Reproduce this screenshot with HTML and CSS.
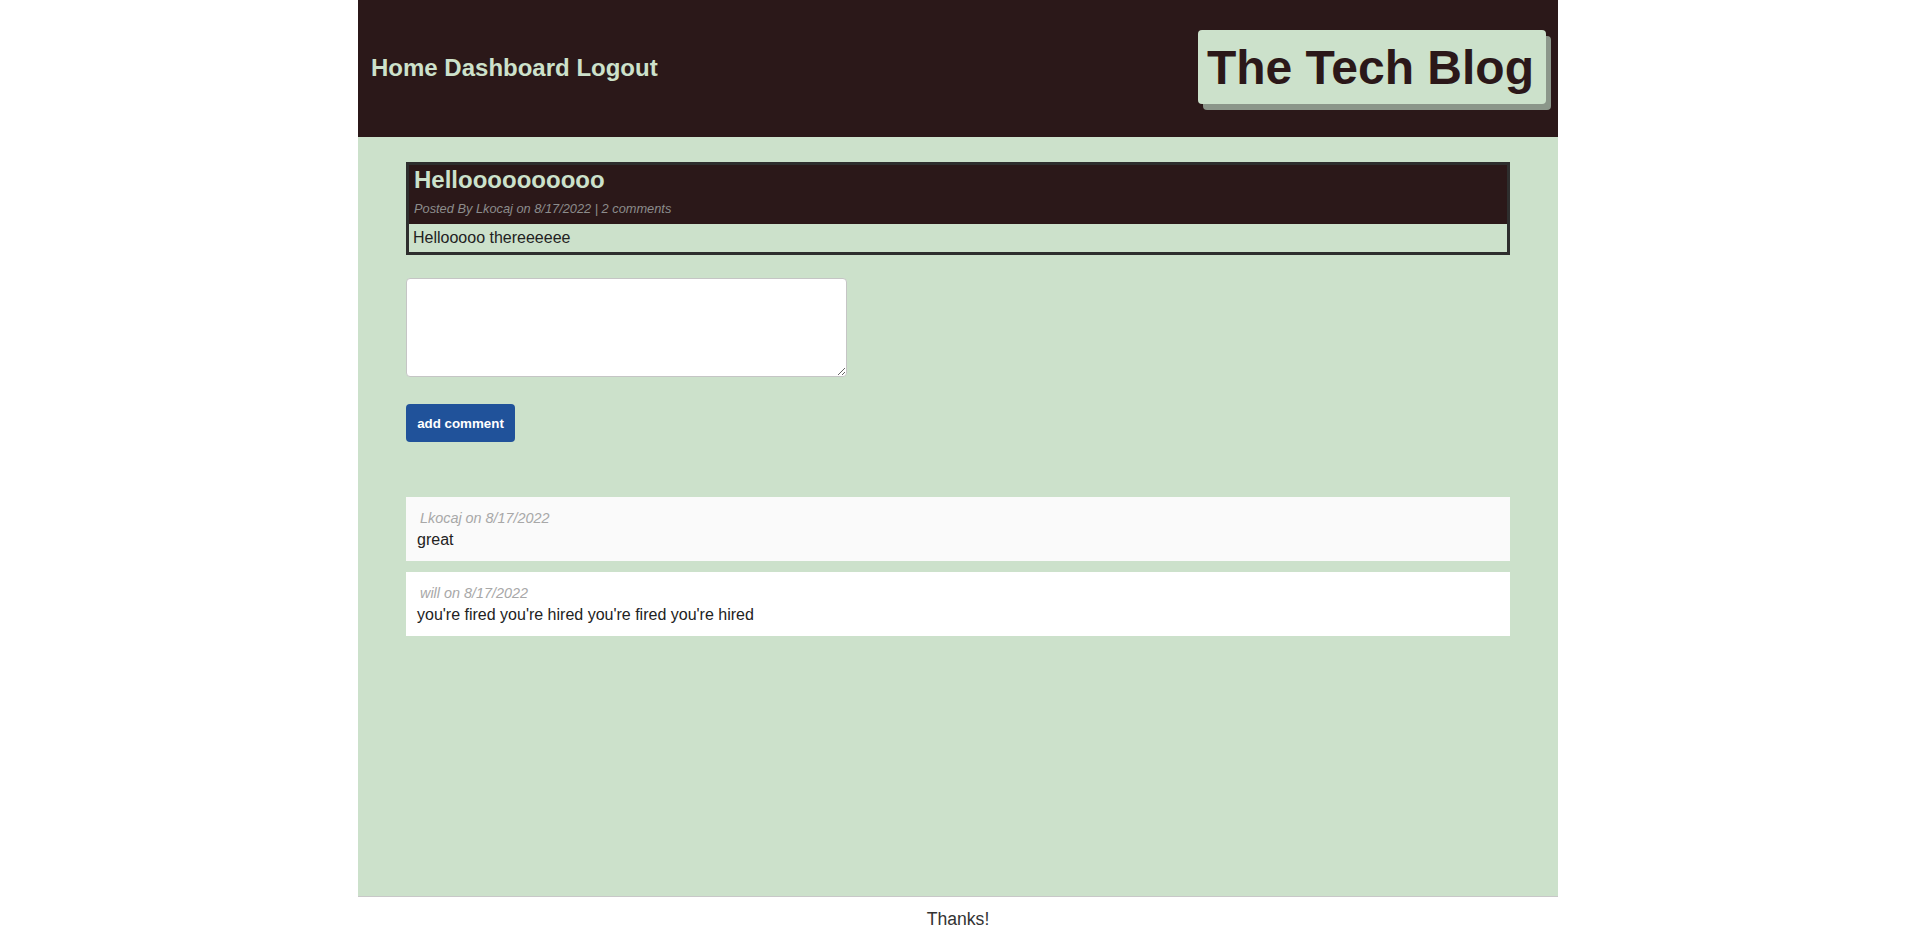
FILE: index.html
```html
<!DOCTYPE html>
<html lang="en">
<head>
<meta charset="utf-8">
<title>The Tech Blog</title>
<link rel="stylesheet" href="styles.css">
</head>
<body>
<div class="page">
  <header class="site-header">
    <nav class="nav">
      <a href="#">Home</a>
      <a href="#">Dashboard</a>
      <a href="#">Logout</a>
    </nav>
    <h1 class="brand">The Tech Blog</h1>
  </header>

  <main class="main">
    <article class="post">
      <div class="post-head">
        <h2 class="post-title">Helloooooooooo</h2>
        <p class="post-meta">Posted By Lkocaj on 8/17/2022 | 2 comments</p>
      </div>
      <div class="post-body">Hellooooo thereeeeee</div>
    </article>

    <form class="comment-form">
      <textarea class="comment-input"></textarea>
      <button type="button" class="btn">add comment</button>
    </form>

    <section class="comments">
      <div class="comment comment-alt">
        <p class="comment-meta">Lkocaj on 8/17/2022</p>
        <p class="comment-text">great</p>
      </div>
      <div class="comment">
        <p class="comment-meta">will on 8/17/2022</p>
        <p class="comment-text">you're fired you're hired you're fired you're hired</p>
      </div>
    </section>
  </main>

  <footer class="site-footer">Thanks!</footer>
</div>
</body>
</html>
```

FILE: styles.css
```css
* {
  box-sizing: border-box;
}

html, body {
  margin: 0;
  padding: 0;
}

body {
  background: #ffffff;
  font-family: "Liberation Sans", Arial, Helvetica, sans-serif;
  color: #222222;
}

.page {
  width: 1200px;
  margin: 0 auto;
  min-height: 100vh;
  display: flex;
  flex-direction: column;
}

.site-header {
  height: 137px;
  background: #2b1819;
  display: flex;
  align-items: center;
  justify-content: space-between;
  padding: 0 12px 1px 13px;
}

.nav {
  font-size: 24px;
  font-weight: bold;
}

.nav a {
  color: #cde1cb;
  text-decoration: none;
}

.brand {
  margin: 0 0 2px;
  font-size: 48px;
  font-weight: bold;
  line-height: normal;
  color: #2b1819;
  background: #cce1cb;
  border-radius: 4px;
  padding: 10px 12px 9px 9px;
  box-shadow: 5px 6px 0 #8b968a;
}

.main {
  flex: 1;
  background: #cce1cb;
  padding: 25px 48px 40px;
}

.post {
  border: 3px solid #2e2e2e;
}

.post-head {
  background: #2b1819;
  padding: 1px 5px 8px;
}

.post-title {
  margin: 0 0 7px;
  font-size: 24px;
  font-weight: bold;
  line-height: normal;
  color: #cce1cb;
}

.post-meta {
  margin: 0;
  font-size: 12.8px;
  font-style: italic;
  color: #8c8c8c;
}

.post-body {
  background: #cce1cb;
  font-size: 16px;
  padding: 5px 4px 5px;
  color: #222222;
}

.comment-form {
  display: flex;
  flex-direction: column;
  align-items: flex-start;
  margin-top: 23px;
}

.comment-input {
  width: 441px;
  height: 99px;
  background: #ffffff;
  border: 1px solid #c5c5c5;
  border-radius: 4px;
  resize: both;
  font-family: inherit;
}

.btn {
  margin-top: 27px;
  width: 109px;
  height: 38px;
  background: #20529a;
  color: #ffffff;
  border: none;
  border-radius: 4px;
  font-family: "Liberation Sans", Arial, sans-serif;
  font-size: 13.33px;
  font-weight: bold;
  padding: 0;
}

.comments {
  margin-top: 55px;
  display: flex;
  flex-direction: column;
  gap: 11px;
}

.comment {
  background: #ffffff;
  padding: 13px 11px 12px;
}

.comment-alt {
  background: #fafafa;
}

.comment-meta {
  margin: 0 0 5px 3px;
  font-size: 14.4px;
  font-style: italic;
  color: #a8a8a8;
}

.comment-text {
  margin: 0;
  font-size: 16px;
  color: #222222;
}

.site-footer {
  height: 46px;
  border-top: 1px solid #c8c8c8;
  background: #ffffff;
  display: flex;
  align-items: center;
  justify-content: center;
  font-size: 17.6px;
  color: #333333;
}
```
